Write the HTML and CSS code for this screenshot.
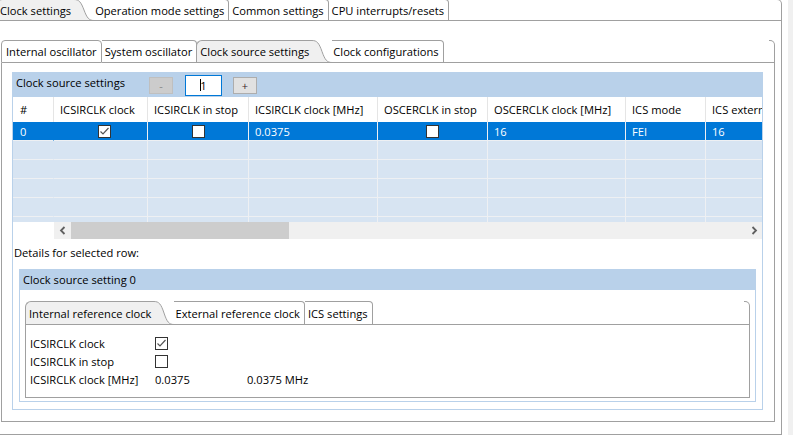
FILE: index.html
```html
<!DOCTYPE html>
<html>
<head>
<meta charset="utf-8">
<title>Clock settings</title>
<link rel="stylesheet" href="styles.css">
</head>
<body>
<div class="screen">
  <div class="folder outer">
    <div class="tabbar h22">
      <div class="tab first sel">Clock settings</div>
      <svg class="curve" width="20" height="22" viewBox="0 0 20 22"><path class="cf" d="M0 0.5 C5 0.5 7 3 10 11 S15 21.5 20 21.5 V22 H0 Z"/><path class="cs" d="M0 0.5 C5 0.5 7 3 10 11 S15 21.5 20 21.5"/><path class="cs" d="M0 21.5 H20"/></svg>
      <div class="tab after">Operation mode settings</div>
      <div class="tab">Common settings</div>
      <div class="tab">CPU interrupts/resets</div>
      <div class="tab-fill"></div>
      <div class="tab-corner"></div>
    </div>
    <div class="folder-body outer-body">
      <div class="folder inner">
        <div class="tabbar">
          <div class="tab first">Internal oscillator</div>
          <div class="tab">System oscillator</div>
          <div class="tab sel">Clock source settings</div>
          <svg class="curve" width="20" height="23" viewBox="0 0 20 23"><path class="cf" d="M0 0.5 C5 0.5 7 3 10 11.5 S15 22.5 20 22.5 V23 H0 Z"/><path class="cs" d="M0 0.5 C5 0.5 7 3 10 11.5 S15 22.5 20 22.5"/><path class="cs" d="M0 22.5 H20"/></svg>
          <div class="tab after">Clock configurations</div>
          <div class="tab-fill"></div>
          <div class="tab-corner"></div>
        </div>
        <div class="folder-body inner-body">
          <div class="sec main">
            <div class="sec-head">
              <span class="sec-title">Clock source settings</span>
              <span class="btn dis">-</span>
              <span class="spin"><span class="caret"></span>1</span>
              <span class="btn">+</span>
            </div>
            <div class="grid">
              <div class="grow head">
                <div class="c-num">#</div><div>ICSIRCLK clock</div><div>ICSIRCLK in stop</div><div>ICSIRCLK clock [MHz]</div><div>OSCERCLK in stop</div><div>OSCERCLK clock [MHz]</div><div>ICS mode</div><div>ICS external reference clock [MHz]</div>
              </div>
              <div class="grow row sel">
                <div class="c-num">0</div>
                <div class="c-cb shift"><span class="cb"><svg width="11" height="11" viewBox="0 0 11 11"><polyline points="1.5,5.5 4,8 9.5,2" class="chk"/></svg></span></div>
                <div class="c-cb"><span class="cb"></span></div>
                <div>0.0375</div>
                <div class="c-cb"><span class="cb"></span></div>
                <div>16</div>
                <div>FEI</div>
                <div>16</div>
              </div>
              <div class="grow row"><div></div><div></div><div></div><div></div><div></div><div></div><div></div><div></div></div>
              <div class="grow row"><div></div><div></div><div></div><div></div><div></div><div></div><div></div><div></div></div>
              <div class="grow row"><div></div><div></div><div></div><div></div><div></div><div></div><div></div><div></div></div>
              <div class="grow row"><div></div><div></div><div></div><div></div><div></div><div></div><div></div><div></div></div>
              <div class="grow row"><div></div><div></div><div></div><div></div><div></div><div></div><div></div><div></div></div>
            </div>
            <div class="hscroll">
              <div class="hs-pad"></div>
              <div class="hs-bar">
                <div class="hs-btn"><svg width="8" height="9" viewBox="0 0 8 9"><polyline points="5.5,1 2,4.5 5.5,8" class="arr"/></svg></div>
                <div class="hs-thumb"></div>
                <div class="hs-track"></div>
                <div class="hs-btn"><svg width="8" height="9" viewBox="0 0 8 9"><polyline points="2.5,1 6,4.5 2.5,8" class="arr"/></svg></div>
              </div>
            </div>
            <div class="details-label">Details for selected row:</div>
            <div class="sec sub">
              <div class="sec-head small">Clock source setting 0</div>
              <div class="folder ref">
                <div class="tabbar h24">
                  <div class="tab first sel">Internal reference clock</div>
                  <svg class="curve" width="20" height="24" viewBox="0 0 20 24"><path class="cf" d="M0 0.5 C5 0.5 7 3 10 12 S15 23.5 20 23.5 V24 H0 Z"/><path class="cs" d="M0 0.5 C5 0.5 7 3 10 12 S15 23.5 20 23.5"/><path class="cs" d="M0 23.5 H20"/></svg>
                  <div class="tab after">External reference clock</div>
                  <div class="tab">ICS settings</div>
                  <div class="tab-fill"></div>
                  <div class="tab-corner"></div>
                </div>
                <div class="folder-body ref-body">
                  <div class="form">
                    <div class="f-label">ICSIRCLK clock</div>
                    <div class="f-val"><span class="cb"><svg width="11" height="11" viewBox="0 0 11 11"><polyline points="1.5,5.5 4,8 9.5,2" class="chk"/></svg></span></div>
                    <div></div>
                    <div class="f-label">ICSIRCLK in stop</div>
                    <div class="f-val"><span class="cb"></span></div>
                    <div></div>
                    <div class="f-label">ICSIRCLK clock [MHz]</div>
                    <div class="f-val">0.0375</div>
                    <div class="f-val">0.0375 MHz</div>
                  </div>
                </div>
              </div>
            </div>
          </div>
        </div>
      </div>
    </div>
  </div>
  <div class="gutter"></div>
  <div class="vstrip"></div>
</div>
</body>
</html>
```

FILE: styles.css
```css
* { box-sizing: border-box; }
html, body { margin: 0; padding: 0; background: #fff; }
body {
  font-family: "Open Sans", "Noto Sans", sans-serif;
  font-size: 11.15px;
  color: #000;
  width: 793px;
  height: 435px;
  overflow: hidden;
}
.screen { display: flex; height: 435px; }
.folder.outer {
  flex: none;
  width: 786px;
  margin-left: -4px;
  margin-top: -1px;
  display: flex;
  flex-direction: column;
}
.gutter { flex: none; width: 6px; }
.vstrip { flex: 1; background: #f0f0f0; }

/* tab folders */
.tabbar { display: flex; flex: none; height: 23px; }
.tabbar.h22 { height: 22px; }
.tabbar.h24 { height: 24px; }
.tab {
  display: flex;
  align-items: center;
  white-space: nowrap;
  padding: 0 4px 0 3px;
  background: #fff;
  border: 1px solid #a0a0a0;
  border-left: none;
  border-top-right-radius: 4px;
}
.tab.first { border-left: 1px solid #a0a0a0; border-top-left-radius: 4px; padding-left: 4px; }
.tab.sel {
  background: #f0f0f0;
  border-left: 1px solid #a0a0a0;
  border-right: none;
  border-top-left-radius: 6px;
  border-top-right-radius: 0;
  margin-left: -1px;
  padding: 0 3px;
}
.tab.first.sel { margin-left: 0; }
.tab.after { padding-left: 1px; }
.curve { flex: none; display: block; }
.curve .cf { fill: #f0f0f0; }
.curve .cs { fill: none; stroke: #a0a0a0; stroke-width: 1; }
.tab-fill { flex: 1; border-bottom: 1px solid #a0a0a0; }
.tab-corner {
  flex: none;
  width: 6px;
  border-top: 1px solid #a0a0a0;
  border-right: 1px solid #a0a0a0;
  border-bottom: 1px solid #a0a0a0;
  border-top-right-radius: 5px;
}
.folder-body { border: 1px solid #a0a0a0; border-top: none; }
.outer-body { flex: 1; padding: 19px 6px 10px 4px; }
.inner-body { padding: 9px 11px 11px 10px; }

/* sections */
.sec { border: 1px solid #b9d1ea; }
.sec-head {
  height: 24px;
  background: #b9d1ea;
  display: flex;
  align-items: center;
  padding-left: 3px;
}
.sec-title { align-self: flex-start; line-height: 20px; width: 133px; flex: none; }
.sec-head.small { height: 20px; line-height: 20px; }
.btn {
  width: 24px;
  height: 17px;
  flex: none;
  display: flex;
  align-items: center;
  justify-content: center;
  background: #e1e1e1;
  border: 1px solid #adadad;
  color: #3a1a2a;
  font-size: 11px;
  margin-right: 11px;
}
.btn.dis { background: #cccccc; border-color: #bfbfbf; color: #8a8a8a; margin-right: 12px; }
.spin {
  width: 37px;
  height: 21px;
  flex: none;
  display: flex;
  align-items: center;
  justify-content: center;
  background: #fff;
  border: 1px solid #0078d7;
  margin-right: 11px;
}
.caret { display: inline-block; width: 1px; height: 12px; background: #000; margin-right: -1px; }

/* table */
.grid { height: 125px; overflow: hidden; }
.grow {
  display: grid;
  grid-template-columns: 41px 94px 101px 129px 110px 138px 80px 100px;
  width: 793px;
}
.grow > div {
  display: flex;
  align-items: center;
  padding-left: 6px;
  white-space: nowrap;
  overflow: hidden;
}
.grow > .c-num { padding-left: 7px; }
.grow.head { height: 25px; background: #fff; }
.grow.head > div { border-right: 1px solid #e5e5e5; }
.grow.row { height: 19px; background: #d7e4f2; }
.grow.row > div { border-right: 1px solid #eef0f3; border-bottom: 1px solid #eef0f3; }
.grow.row > div:first-child { border-right-color: transparent; }
.grow.sel { background: #0078d7; color: #fff; }
.grow > .c-cb { justify-content: center; padding-left: 0; }
.grow > .c-cb.shift { padding-left: 8px; }
.cb {
  width: 13px;
  height: 13px;
  flex: none;
  border: 1px solid #333;
  background: #fff;
  display: flex;
  align-items: center;
  justify-content: center;
}
.cb svg { display: block; }
.chk { fill: none; stroke: #555; stroke-width: 1.2; }

/* horizontal scrollbar */
.hscroll { display: flex; height: 17px; }
.hs-pad { width: 41px; flex: none; }
.hs-bar { flex: 1; display: flex; background: #f0f0f0; }
.hs-btn { width: 17px; flex: none; display: flex; align-items: center; justify-content: center; }
.hs-btn svg { display: block; }
.arr { fill: none; stroke: #606060; stroke-width: 1.8; }
.hs-thumb { width: 218px; flex: none; background: #cdcdcd; }
.hs-track { flex: 1; }

.details-label { height: 30px; padding: 5px 0 0 1px; line-height: 17px; }
.sec.sub { margin: 0 6px 7px 6px; }
.folder.ref { margin: 11px 5px 3px 5px; }
.ref-body { height: 73px; padding: 9px 0 0 4px; }
.form {
  display: grid;
  grid-template-columns: 125px 92px auto;
  grid-template-rows: 18px 18px 19px;
}
.form > div { display: flex; align-items: center; white-space: nowrap; }
```
